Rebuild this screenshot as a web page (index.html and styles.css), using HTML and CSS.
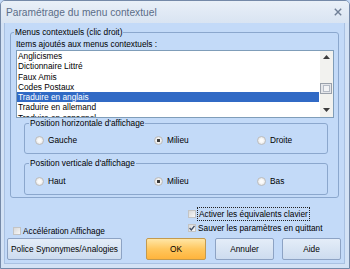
FILE: index.html
```html
<!DOCTYPE html>
<html lang="fr">
<head>
<meta charset="utf-8">
<title>Paramétrage du menu contextuel</title>
<link rel="stylesheet" href="styles.css">
</head>
<body>
<div class="window">
  <div class="titlebar">
    <span class="title">Paramétrage du menu contextuel</span>
    <svg class="close" width="8" height="8" viewBox="0 0 8 8"><path d="M0.8 0.8 L7.2 7.2 M7.2 0.8 L0.8 7.2" stroke="#6f7f96" stroke-width="1.4" fill="none"/></svg>
  </div>
  <div class="client">
    <fieldset class="group outer">
      <legend>Menus contextuels (clic droit)</legend>
      <div class="caption">Items ajoutés aux menus contextuels :</div>
      <div class="listbox">
        <ul class="items">
          <li>Anglicismes</li>
          <li>Dictionnaire Littré</li>
          <li>Faux Amis</li>
          <li>Codes Postaux</li>
          <li class="sel">Traduire en anglais</li>
          <li>Traduire en allemand</li>
          <li>Traduire en espagnol</li>
        </ul>
        <div class="vscroll">
          <div class="sb-btn up"><svg width="7" height="4" viewBox="0 0 7 4"><path d="M0 4 L3.5 0 L7 4 Z" fill="#3c3c3c"/></svg></div>
          <div class="sb-track"><div class="thumb"><span></span></div></div>
          <div class="sb-btn down"><svg width="7" height="4" viewBox="0 0 7 4"><path d="M0 0 L7 0 L3.5 4 Z" fill="#3c3c3c"/></svg></div>
        </div>
      </div>
      <fieldset class="group pos">
        <legend>Position horizontale d'affichage</legend>
        <div class="radios">
          <label class="radio"><span class="rb"></span>Gauche</label>
          <label class="radio"><span class="rb on"></span>Milieu</label>
          <label class="radio"><span class="rb"></span>Droite</label>
        </div>
      </fieldset>
      <fieldset class="group pos second">
        <legend>Position verticale d'affichage</legend>
        <div class="radios">
          <label class="radio"><span class="rb"></span>Haut</label>
          <label class="radio"><span class="rb on"></span>Milieu</label>
          <label class="radio"><span class="rb"></span>Bas</label>
        </div>
      </fieldset>
    </fieldset>
    <div class="options">
      <div class="opt-left">
        <label class="check"><span class="cb"></span>Accélération Affichage</label>
      </div>
      <div class="opt-right">
        <label class="check"><span class="cb"></span><span class="focus">Activer les équivalents clavier</span></label>
        <label class="check"><span class="cb on"><svg width="6" height="6" viewBox="0 0 6 6"><path d="M0.6 3 L2.3 4.9 L5.5 0.8" stroke="#3a4963" stroke-width="1.3" fill="none"/></svg></span><span class="txt">Sauver les paramètres en quittant</span></label>
      </div>
    </div>
    <div class="buttons">
      <div class="btn police">Police Synonymes/Analogies</div>
      <div class="btn ok">OK</div>
      <div class="btn cancel">Annuler</div>
      <div class="btn help">Aide</div>
    </div>
  </div>
</div>
</body>
</html>
```
FILE: styles.css
```css
html, body {
  margin: 0;
  padding: 0;
}
body {
  width: 350px;
  height: 269px;
  overflow: hidden;
  font-family: "Liberation Sans", Arial, sans-serif;
  font-size: 8.3px;
  color: #000;
  background: #c3daf8;
}
.window {
  width: 350px;
  height: 269px;
  box-sizing: border-box;
  border: 1px solid #7489a8;
  border-radius: 5px 5px 0 0;
  background: #d3e2f5;
  display: flex;
  flex-direction: column;
  overflow: hidden;
}
.titlebar {
  height: 22px;
  flex: none;
  display: flex;
  align-items: center;
  padding: 0 7px 0 5px;
  background: linear-gradient(#e9f0f8, #d9e4f2);
}
.title {
  flex: 1;
  font-size: 10.2px;
  color: #5b6d88;
  white-space: nowrap;
}
.close {
  display: block;
}
.client {
  flex: 1;
  margin: 0 4px 4px 3px;
  border: 1px solid #a9c1e2;
  border-top: none;
  background: #c3daf8;
  padding: 4px 3px 0 2px;
}
.group {
  margin: 0;
  box-sizing: border-box;
  border: 1px solid #8ba7cd;
  border-radius: 3px;
  min-width: 0;
}
.group legend {
  padding: 0 1px;
  margin-left: -2px;
  line-height: 10px;
  font-size: 8.3px;
}
.outer {
  margin: 0 2px 0 3px;
  padding: 2px 4px 2px 5px;
}
.caption {
  line-height: 10px;
  height: 10px;
  margin-bottom: 1px;
  white-space: nowrap;
}
.listbox {
  height: 68px;
  box-sizing: border-box;
  border: 1px solid #7f9db9;
  background: #fff;
  display: flex;
  overflow: hidden;
}
.items {
  flex: 1;
  list-style: none;
  margin: 0;
  padding: 0;
  overflow: hidden;
}
.items li {
  height: 10.3px;
  line-height: 10.3px;
  padding-left: 1px;
  white-space: nowrap;
}
.items li.sel {
  background: #316ac5;
  color: #fff;
}
.vscroll {
  width: 13px;
  margin-left: 1px;
  background: #f2f2ef;
  display: flex;
  flex-direction: column;
}
.sb-btn {
  height: 12px;
  display: flex;
  align-items: center;
  justify-content: center;
}
.sb-btn svg {
  display: block;
}
.sb-btn.down {
  align-items: flex-start;
  padding-top: 3px;
  box-sizing: border-box;
}
.sb-track {
  flex: 1;
}
.thumb {
  margin: 20px 1px 0 0;
  height: 11px;
  box-sizing: border-box;
  border: 1px solid #9aa1ab;
  background: #e4e6ea;
  display: flex;
  align-items: center;
  justify-content: center;
}
.thumb span {
  width: 5px;
  height: 5px;
  border: 1px solid #b6bcc6;
  background: #f2f3f5;
}
.pos {
  width: 304px;
  margin: 0 0 0 8px;
  padding: 6px 0 7px 10px;
}
.pos legend {
  margin-left: -6px;
}
.pos.second {
  margin-top: 4px;
  padding-top: 7px;
}
.radios {
  display: grid;
  grid-template-columns: 119px 103px 1fr;
  height: 12px;
  align-items: center;
}
.radio {
  display: flex;
  align-items: center;
  gap: 4px;
  white-space: nowrap;
}
.rb {
  width: 9px;
  height: 9px;
  flex: none;
  box-sizing: border-box;
  border-radius: 50%;
  border: 1px solid #bdbdbd;
  background: radial-gradient(circle, #fbfbfb 0 30%, #d8d8d8 100%);
}
.rb.on {
  background: radial-gradient(circle, #3a3a3a 0 1.4px, #f4f4f4 1.9px, #d8d8d8 100%);
}
.options {
  margin-top: 9px;
  display: grid;
  grid-template-columns: 181px 1fr;
  height: 31px;
}
.opt-left {
  padding: 17px 0 0 6px;
}
.check {
  display: flex;
  align-items: center;
  height: 14px;
  white-space: nowrap;
}
.cb {
  width: 8px;
  height: 8px;
  flex: none;
  box-sizing: border-box;
  border: 1px solid #c4c4c4;
  background: linear-gradient(135deg, #d9d9d9, #f7f7f7);
  margin-right: 2px;
  display: flex;
  align-items: center;
  justify-content: center;
}
.opt-right .cb {
  margin-right: 1px;
}
.cb svg {
  display: block;
}
.focus {
  border: 1px dotted #222;
  padding: 0 1px;
  line-height: 12px;
}
.txt {
  padding-left: 1px;
}
.buttons {
  display: flex;
  height: 22px;
}
.btn {
  height: 22px;
  box-sizing: border-box;
  border: 1px solid #8da3c4;
  border-radius: 2px;
  background: linear-gradient(#e4edf8, #cddcef);
  display: flex;
  align-items: center;
  justify-content: center;
  white-space: nowrap;
}
.police {
  width: 115px;
}
.ok {
  width: 60px;
  margin-left: 24px;
  border-color: #c39a4e;
  background: linear-gradient(#ffe6a6, #ffc75e 50%, #ffb43c);
}
.cancel {
  width: 59px;
  margin-left: 9px;
}
.help {
  width: 59px;
  margin-left: 8px;
}
```
